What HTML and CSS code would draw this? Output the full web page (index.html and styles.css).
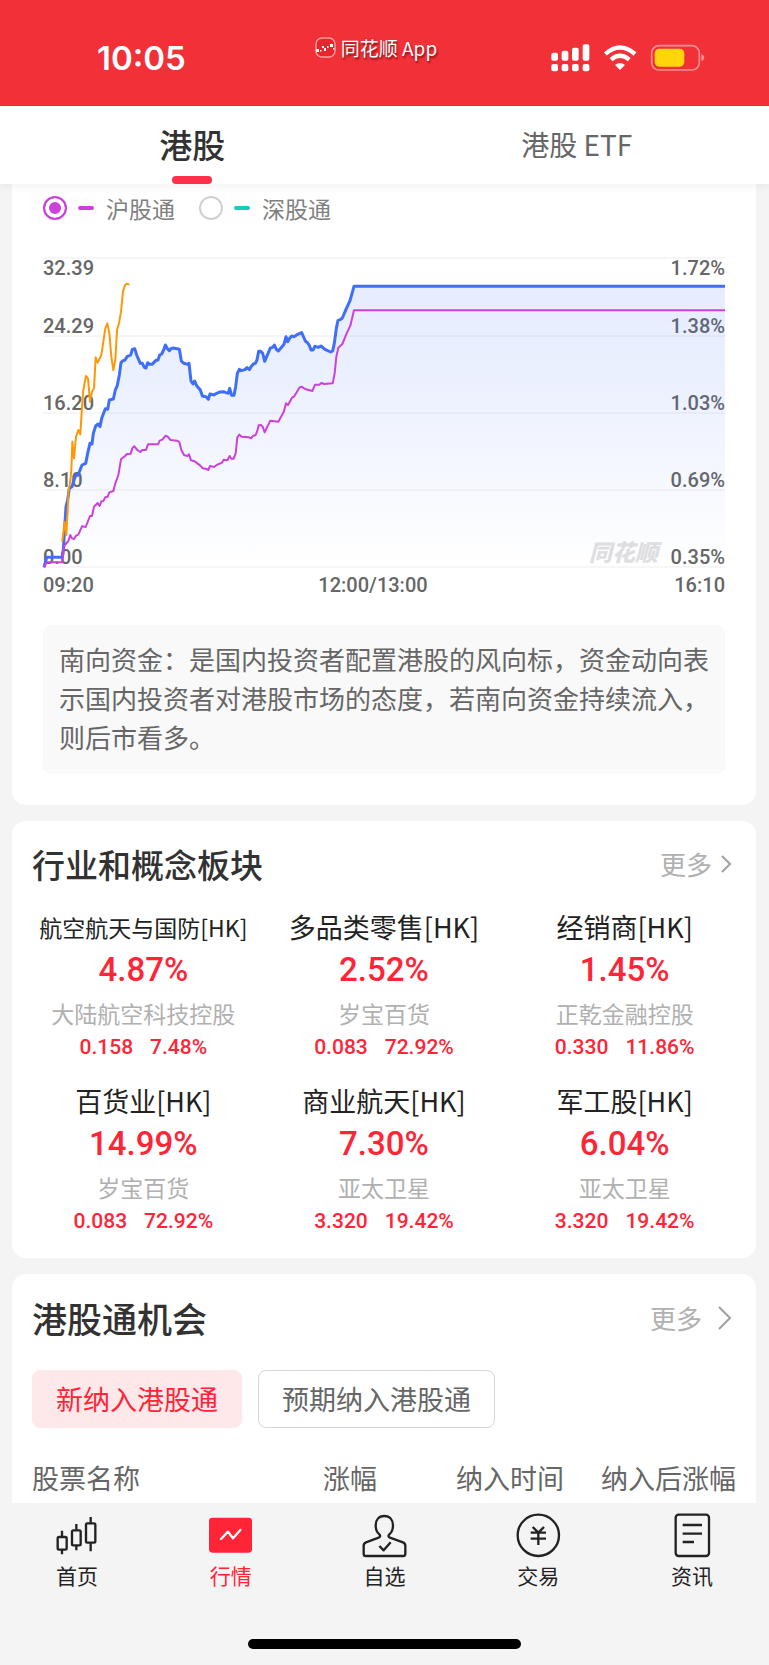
FILE: index.html
```html
<!DOCTYPE html>
<html lang="zh-CN">
<head>
<meta charset="utf-8">
<meta name="viewport" content="width=device-width, initial-scale=1">
<title>港股</title>
<link rel="stylesheet" href="styles.css">
</head>
<body>
<header class="status">
  <span class="time">10:05</span>
  <span class="app">
    <svg class="app-logo" viewBox="0 0 22 22" aria-hidden="true">
      <rect x="1" y="1" width="19" height="19" rx="6" fill="#e8242c" stroke="#f9a0a3" stroke-width="1.4"/>
      <path d="M1 12h3v3h-3zM5 13h1.500v1.500h-1.500zM7 9h2v2h-2zM9 11h2v3h-2zM12 9h1.500v2h-1.500zM15 7h3v3h-3zM18 11h1.500v1.500h-1.500z" fill="#fff"/>
    </svg>
    同花顺 App
  </span>
  <svg class="indicators" viewBox="500 130 462 84" role="img" aria-label="信号、无线网络、电池">
    <g fill="#fff">
      <rect x="501" y="156" width="20" height="24" rx="6"/><rect x="532" y="150" width="20" height="30" rx="6"/>
      <rect x="563" y="141" width="20" height="39" rx="6"/><rect x="595" y="131" width="20" height="49" rx="6"/>
      <rect x="501" y="190" width="20" height="22" rx="6"/><rect x="532" y="190" width="20" height="22" rx="6"/>
      <rect x="563" y="190" width="20" height="22" rx="6"/><rect x="595" y="190" width="20" height="22" rx="6"/>
      <path d="M692 193Q707 181 722 193L707 208Z"/>
    </g>
    <path d="M663 160Q707 121 752 160M680 177Q707 154 735 177" fill="none" stroke="#fff" stroke-width="13"/>
    <rect x="802" y="135" width="143" height="73" rx="22" fill="none" stroke="#f98f93" stroke-width="5"/>
    <path d="M951 161q9 3 9 10t-9 10z" fill="#f98f93"/>
    <rect x="811" y="144" width="89" height="54" rx="14" fill="#ffd60a"/>
  </svg>
</header>

<nav class="tabs">
  <a class="tab active" href="#hk">港股</a>
  <a class="tab" href="#etf">港股 ETF</a>
</nav>

<main>
  <section class="card flow" id="hk">
    <div class="legend">
      <label class="choice sh"><input type="radio" name="line" checked><i></i>沪股通</label>
      <label class="choice sz"><input type="radio" name="line"><i></i>深股通</label>
    </div>
    <svg class="chart" viewBox="0 0 684 350" role="img" aria-label="南向资金走势">
      <defs>
        <linearGradient id="area" x1="0" y1="0" x2="0" y2="1">
          <stop offset="0" stop-color="#3f6ff8" stop-opacity=".13"/>
          <stop offset=".35" stop-color="#3f6ff8" stop-opacity=".1"/>
          <stop offset="1" stop-color="#3f6ff8" stop-opacity="0"/>
        </linearGradient>
      </defs>
      <text class="mark" x="547" y="311">同花顺</text>
      <g class="axis">
        <text x="1" y="25">32.39</text><text x="1" y="83">24.29</text><text x="1" y="160">16.20</text><text x="1" y="237">8.10</text><text x="1" y="314">0.00</text>
        <text x="1" y="342">09:20</text>
      </g>
      <g class="axis end">
        <text x="683" y="25">1.72%</text><text x="683" y="83">1.38%</text><text x="683" y="160">1.03%</text><text x="683" y="237">0.69%</text><text x="683" y="314">0.35%</text>
        <text x="683" y="342">16:10</text>
      </g>
      <text class="axis mid" x="331" y="342">12:00/13:00</text>
      <path class="grid" d="M1 8H683M1 86H683M1 163H683M1 240H683M1 317H683"/>
      <g transform="translate(-12 -10) scale(.33333)">
        <path fill="url(#area)" d="M42 982L50 952 97 952 108 800 126 740 138 705 156 675 167 670 180 610 197 558 210 560 226 506 238 480 250 477 262 436 273 368 302 345 314 326 331 370 348 384 378 361 406 315 448 328 460 369 477 370 483 423 500 437 517 468 535 477 592 460 612 466 622 400 670 372 686 334 704 364 721 324 745 333 768 290 815 278 843 330 873 318 902 336 919 265 937 234 960 182 972 139H2085V982Z"/>
        <path class="line blue" d="M42 982L50 952 97 952 100 930 103 880 108 800 113 780 118 745 126 740 132 720 138 705 144 706 156 675 167 670 173 640 180 610 186 612 190 580 197 558 204 552 210 560 215 535 226 506 233 508 238 480 250 477 256 450 262 436 268 405 273 368 279 362 285 360 291 350 302 345 307 328 314 326 320 345 331 370 337 370 343 382 348 384 353 368 358 373 366 373 378 361 384 360 389 345 395 342 401 330 406 315 412 326 418 332 423 326 430 324 448 328 454 363 460 369 472 373 477 370 483 423 489 432 494 423 500 437 511 450 517 468 528 470 535 478 540 462 552 465 560 460 570 456 580 455 588 458 595 460 599 445 605 466 612 466 617 440 622 400 628 388 634 392 645 389 651 383 658 389 663 380 670 372 676 370 681 360 686 334 692 334 698 340 704 364 710 350 721 324 728 322 733 315 739 328 745 333 756 320 762 313 768 290 773 305 778 296 785 288 792 290 803 283 815 278 826 303 832 308 838 316 843 330 849 330 855 319 865 322 873 318 885 328 902 336 908 333 913 310 919 265 924 241 931 239 937 234 948 208 960 182 972 139H2085"/>
        <path class="line purple" d="M42 982L50 967 97 967 102 920 107 912 115 903 121 885 126 895 132 897 138 887 145 884 156 859 167 861 180 828 186 828 192 800 203 789 209 798 214 784 220 783 226 772 233 770 238 757 250 753 256 730 265 705 273 658 285 648 291 642 302 641 307 625 313 619 322 630 331 636 337 630 348 630 354 613 384 613 389 602 397 599 407 587 413 590 421 600 441 602 448 606 454 630 462 645 472 648 477 643 483 661 494 664 511 677 518 685 527 686 535 690 540 678 552 681 560 675 576 668 581 659 592 661 599 648 604 656 611 656 617 640 622 592 628 584 635 590 657 592 663 595 670 587 677 585 682 572 686 556 693 555 698 560 704 577 712 560 721 542 745 545 756 525 762 514 768 490 774 495 786 473 792 470 808 443 815 440 825 447 847 453 855 434 868 434 874 429 883 432 908 430 914 400 919 350 925 323 937 312 950 280 961 257 972 211H2085"/>
        <path class="line orange" d="M97 903L101 870 104 845 109 885 113 810 116 750 120 730 124 690 127 605 132 655 138 590 145 570 151 583 156 500 160 450 168 408 174 415 180 485 186 455 192 445 197 352 203 368 214 345 226 265 232 250 238 280 244 350 250 390 256 360 261 270 267 250 273 215 279 155 285 135 290 131 296 133"/>
      </g>
    </svg>
    <p class="note">南向资金：是国内投资者配置港股的风向标，资金动向表示国内投资者对港股市场的态度，若南向资金持续流入，则后市看多。</p>
  </section>

  <section class="card sectors">
    <div class="head">
      <h2>行业和概念板块</h2>
      <a class="more" href="#sectors">更多<svg class="chev small" viewBox="0 0 12 20" aria-hidden="true"><path d="M2 2l8 8-8 8"/></svg></a>
    </div>
    <ul class="grid3">
      <li><h3 class="long">航空航天与国防[HK]</h3><strong>4.87%</strong><span class="stock">大陆航空科技控股</span><span class="quote"><b>0.158</b><b>7.48%</b></span></li>
      <li><h3>多品类零售[HK]</h3><strong>2.52%</strong><span class="stock">岁宝百货</span><span class="quote"><b>0.083</b><b>72.92%</b></span></li>
      <li><h3>经销商[HK]</h3><strong>1.45%</strong><span class="stock">正乾金融控股</span><span class="quote"><b>0.330</b><b>11.86%</b></span></li>
      <li><h3>百货业[HK]</h3><strong>14.99%</strong><span class="stock">岁宝百货</span><span class="quote"><b>0.083</b><b>72.92%</b></span></li>
      <li><h3>商业航天[HK]</h3><strong>7.30%</strong><span class="stock">亚太卫星</span><span class="quote"><b>3.320</b><b>19.42%</b></span></li>
      <li><h3>军工股[HK]</h3><strong>6.04%</strong><span class="stock">亚太卫星</span><span class="quote"><b>3.320</b><b>19.42%</b></span></li>
    </ul>
  </section>

  <section class="card chances">
    <div class="head">
      <h2>港股通机会</h2>
      <a class="more" href="#chances">更多<svg class="chev large" viewBox="0 0 14 24" aria-hidden="true"><path d="M1 1l11 11-11 11"/></svg></a>
    </div>
    <div class="filters">
      <button class="filter on" type="button">新纳入港股通</button>
      <button class="filter" type="button">预期纳入港股通</button>
    </div>
    <table>
      <thead><tr><th class="name">股票名称</th><th class="rise">涨幅</th><th class="date">纳入时间</th><th class="after">纳入后涨幅</th></tr></thead>
    </table>
  </section>
</main>

<footer class="dock">
  <nav class="dock-nav">
    <a href="#home"><svg viewBox="164 70 135 135" aria-hidden="true"><g class="ink"><rect x="175" y="142" width="27" height="38" rx="4"/><rect x="218" y="122" width="26" height="45" rx="4"/><rect x="260" y="101" width="28" height="58" rx="4"/><path d="M188 123v17M188 181v13M231 103v17M231 168v14M274 82v17M274 160v25"/></g></svg>首页</a>
    <a class="current" href="#market"><svg viewBox="624 70 135 135" aria-hidden="true"><rect x="627" y="84" width="129" height="105" rx="10" fill="#ff2436"/><path d="M663 148l21-22 15 20 22-25" fill="none" stroke="#fff" stroke-width="7" stroke-linecap="round" stroke-linejoin="round"/></svg>行情</a>
    <a href="#watch"><svg viewBox="1086 70 135 135" aria-hidden="true"><g class="ink"><path d="M1153 79c-17 0-26 12-26 28 0 13 4 22 11 27 4 4 3 8-2 10l-38 14c-5 2-7 5-7 10v24c0 5 2 7 7 7h111c5 0 7-2 7-7v-24c0-5-2-8-7-10l-39-14c-5-2-6-6-2-10 7-5 11-14 11-27 0-16-9-28-26-28z"/><path d="M1138 169l13 13 21-24"/></g></svg>自选</a>
    <a href="#trade"><svg viewBox="393 70 135 135" aria-hidden="true"><g class="ink"><circle cx="460" cy="137" r="62"/><path d="M443 112l17 17 17-17M437 129h46M437 147h46M460 129v37"/></g></svg>交易</a>
    <a href="#news"><svg viewBox="854 70 135 135" aria-hidden="true"><g class="ink"><rect x="871" y="75" width="100" height="124" rx="9"/><path d="M892 106h58M892 132h58M892 157h34"/></g></svg>资讯</a>
  </nav>
  <div class="home-bar"></div>
</footer>
</body>
</html>
```

FILE: styles.css
```css
* { box-sizing: border-box; }

body {
  margin: 0;
  background: #f4f4f4;
  color: #323232;
  font-family: "Noto Sans CJK SC", sans-serif;
}

a { color: inherit; text-decoration: none; }
h2, h3, p, ul { margin: 0; padding: 0; }
svg { display: block; }

/* status bar */
.status {
  display: grid;
  grid-template-columns: 1fr auto 1fr;
  align-items: center;
  height: 106px;
  padding: 10px 64px 0 97px;
  background: #f23038;
  color: #fff;
}
.time { font: 600 33px/40px Inter, sans-serif; }
.app {
  display: flex;
  align-items: center;
  gap: 4px;
  margin: 0 50px 20px 0;
  font-size: 19px;
  line-height: 24px;
  text-shadow: 1px 2px 2px rgba(90, 0, 0, .7);
}
.app-logo { width: 22px; height: 22px; }
.indicators { width: 154px; height: 28px; justify-self: end; }

/* top tabs */
.tabs {
  position: relative;
  display: grid;
  grid-template-columns: 1fr 1fr;
  height: 78px;
  background: #fff;
  box-shadow: 0 2px 8px rgba(0, 0, 0, .06);
}
.tab {
  display: flex;
  flex-direction: column;
  align-items: center;
  justify-content: flex-end;
  padding-bottom: 20px;
  color: #666;
  font-size: 28px;
  line-height: 40px;
}
.tab.active {
  gap: 12px;
  padding-bottom: 0;
  color: #323232;
  font-size: 33px;
  font-weight: 500;
}
.tab.active::after {
  content: "";
  width: 40px;
  height: 8px;
  border-radius: 4px;
  background: #ff3048;
}

/* cards */
main {
  display: flex;
  flex-direction: column;
  gap: 16px;
  padding: 0 13px 0 12px;
}
.card { border-radius: 14px; background: #fff; }
.flow { padding: 7px 30px 31px; border-radius: 0 0 14px 14px; }

.legend { display: flex; gap: 24px; padding-left: 1px; }
.choice {
  display: flex;
  align-items: center;
  color: #808080;
  font-size: 23px;
  line-height: 34px;
}
.choice input {
  appearance: none;
  width: 24px;
  height: 24px;
  margin: 0;
  border: 2px solid #d0d0d0;
  border-radius: 50%;
  background: #fff;
}
.choice i { width: 16px; height: 4px; margin: 0 12px 0 11px; border-radius: 2px; }
.sh i { background: #cc40dc; }
.sz i { background: #18cbc0; }
.sh input:checked { border-color: #cc40dc; background: #cc40dc; box-shadow: inset 0 0 0 4px #fff; }

.chart { width: 100%; height: auto; margin-top: 25px; overflow: visible; }
.axis { fill: #666; font: 500 20px Roboto, sans-serif; }
.end { text-anchor: end; }
.mid { text-anchor: middle; }
.mark { fill: #dfdfe2; font-size: 23px; font-weight: 900; font-style: italic; }
.grid { fill: none; stroke: rgba(0, 0, 0, .07); }
.line { fill: none; stroke-linejoin: round; }
.blue { stroke: #3f6ff8; stroke-width: 9; }
.purple { stroke: #cc40dc; stroke-width: 6; }
.orange { stroke: #ff970a; stroke-width: 6; stroke-linecap: round; }

.note {
  margin: 25px 1px 0;
  padding: 14px 16px 18px;
  border-radius: 8px;
  background: #f9f9f9;
  color: #666;
  font-size: 26px;
  line-height: 39px;
}

.head {
  display: flex;
  align-items: center;
  justify-content: space-between;
  height: 86px;
  padding: 0 24px 0 20px;
}
.head h2 { font-size: 33px; font-weight: 500; line-height: 48px; }
.more {
  display: flex;
  align-items: center;
  gap: 8px;
  color: #b0b0b0;
  font-size: 26px;
  line-height: 40px;
}
.chev { fill: none; stroke: #a0a0a0; stroke-width: 2; }
.small { width: 12px; height: 20px; }
.large { width: 14px; height: 24px; }

/* sectors */
.grid3 {
  display: grid;
  grid-template-columns: repeat(3, 1fr);
  row-gap: 20px;
  padding: 0 11px 23px;
  list-style: none;
}
.grid3 li { display: flex; flex-direction: column; align-items: center; color: #ff2436; }
.grid3 h3 { color: #222; font-size: 27px; font-weight: 400; line-height: 40px; white-space: nowrap; }
.grid3 h3.long { font-size: 23px; }
.grid3 strong { font: 500 33px/46px Roboto, sans-serif; }
.stock { color: #b0b0b0; font-size: 23px; line-height: 40px; }
.quote { display: flex; gap: 17px; font: 21px/28px Roboto, sans-serif; }
.quote b { font-weight: 500; }

/* opportunities */
.chances { border-radius: 14px 14px 0 0; }
.chances .head { height: 96px; padding-bottom: 8px; }
.chances h2 { font-size: 35px; }
.chances .more { gap: 16px; }
.filters { display: flex; gap: 16px; padding: 0 20px; }
.filter {
  height: 58px;
  padding: 0 23px;
  border: 1px solid #d6d6d6;
  border-radius: 8px;
  background: #fff;
  color: #666;
  font: 27px/40px "Noto Sans CJK SC", sans-serif;
}
.filter.on { border-color: #ffe8ea; background: #ffe8ea; color: #ff2436; }
table { width: 100%; margin-top: 28px; padding: 0 20px 3px; border-spacing: 0; table-layout: fixed; }
th {
  padding: 0;
  color: #666;
  font-size: 27px;
  font-weight: 400;
  line-height: 44px;
  text-align: right;
  white-space: nowrap;
}
.name { text-align: left; }
.rise { width: 120px; }
.date { width: 187px; }
.after { width: 172px; }

/* bottom dock */
.dock { padding: 10px 0 16px; background: #f4f4f4; }
.dock-nav { display: grid; grid-template-columns: repeat(5, 1fr); }
.dock-nav a {
  display: flex;
  flex-direction: column;
  align-items: center;
  gap: 3px;
  color: #222;
  font-size: 21px;
  line-height: 28px;
}
.dock-nav .current { color: #ff2436; }
.dock-nav svg { width: 45px; height: 45px; }
.ink { fill: none; stroke: #222; stroke-width: 7; stroke-linejoin: round; }
.home-bar { width: 273px; height: 10px; margin: 50px auto 0; border-radius: 5px; background: #000; }
```
